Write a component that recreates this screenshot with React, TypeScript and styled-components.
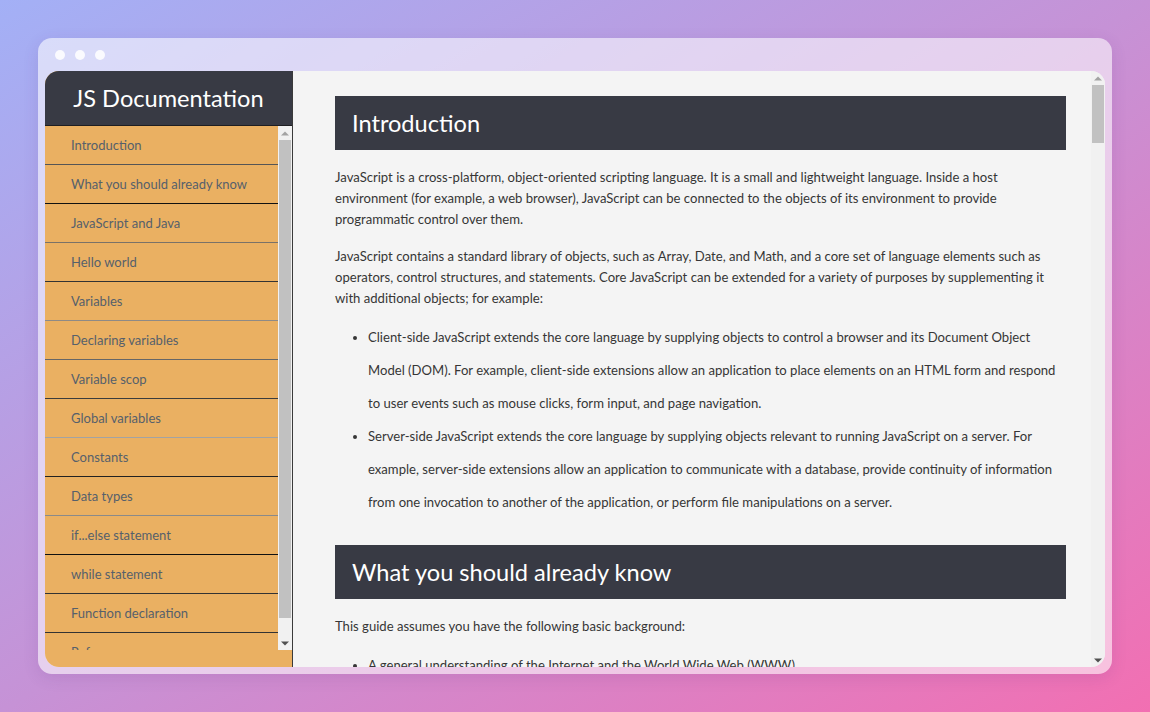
import React from "react";
import styled, { createGlobalStyle } from "styled-components";

const GlobalStyle = createGlobalStyle`
  html, body { margin: 0; padding: 0; }
  body {
    width: 1150px;
    height: 712px;
    overflow: hidden;
    font-family: Lato, "Noto Sans", sans-serif;
    background: linear-gradient(to bottom right, #a3b0f6 0%, #c692d6 50%, #f26fb2 100%);
  }
`;

const Stage = styled.div`
  box-sizing: border-box;
  width: 1150px;
  height: 712px;
  padding: 38px;
`;

const Frame = styled.div`
  box-sizing: border-box;
  height: 636px;
  border-radius: 14px;
  background: rgba(255, 255, 255, 0.57);
  box-shadow: 0 4px 16px rgba(80, 40, 120, 0.12);
  padding: 0 7px 7px 7px;
  display: flex;
  flex-direction: column;
`;

const TitleBar = styled.div`
  height: 33px;
  display: flex;
  align-items: center;
  gap: 10px;
  padding-left: 10px;
  flex-shrink: 0;
`;

const Dot = styled.span`
  width: 10px;
  height: 10px;
  border-radius: 50%;
  background: rgba(255, 255, 255, 0.85);
`;

const Window = styled.div`
  flex: 1;
  min-height: 0;
  display: flex;
  border-radius: 14px;
  overflow: hidden;
  background: #f4f4f4;
`;

/* ---------- classic scrollbar drawing ---------- */

const Track = styled.div<{ $width: number }>`
  width: ${(p) => p.$width}px;
  flex-shrink: 0;
  background: #f1f1f1;
  display: flex;
  flex-direction: column;
`;

const ArrowBtn = styled.div`
  height: 14px;
  flex-shrink: 0;
  display: flex;
  align-items: center;
  justify-content: center;
`;

const Thumb = styled.div<{ $size: number }>`
  height: ${(p) => p.$size}px;
  margin: 0 1px;
  background: #c1c1c1;
  flex-shrink: 0;
`;

const TrackRest = styled.div`
  flex: 1;
`;

const Arrow = ({ down, color }: { down?: boolean; color: string }) => (
  <svg width="8" height="5" viewBox="0 0 8 5">
    <polygon
      points={down ? "0,0.5 8,0.5 4,4.5" : "0,4.5 8,4.5 4,0.5"}
      fill={color}
    />
  </svg>
);

const Scrollbar = ({ width, thumb }: { width: number; thumb: number }) => (
  <Track $width={width}>
    <ArrowBtn>
      <Arrow color="#a3a3a3" />
    </ArrowBtn>
    <Thumb $size={thumb} />
    <TrackRest />
    <ArrowBtn>
      <Arrow down color="#505050" />
    </ArrowBtn>
  </Track>
);

/* ---------- sidebar ---------- */

const Sidebar = styled.nav`
  width: 247px;
  flex-shrink: 0;
  background: #eab062;
  border-right: 1px solid #3a3a3a;
  display: flex;
  flex-direction: column;
`;

const SideHeader = styled.header`
  height: 55px;
  flex-shrink: 0;
  background: #383a44;
  color: #ffffff;
  display: flex;
  align-items: center;
  justify-content: center;
  font-size: 23.6px;
  font-weight: 400;
  border-bottom: 1px solid #1e1e22;
  box-sizing: border-box;
`;

const NavBody = styled.div`
  height: 524px;
  display: flex;
  flex-shrink: 0;
`;

const NavList = styled.ul`
  flex: 1;
  min-width: 0;
  list-style: none;
  margin: 0;
  padding: 0;
  overflow: hidden;
`;

const NavItem = styled.li<{ $line: string }>`
  box-sizing: border-box;
  height: 39px;
  display: flex;
  align-items: center;
  padding-left: 26px;
  font-size: 13px;
  color: #56606b;
  border-bottom: 1px solid ${(p) => p.$line};
  white-space: nowrap;
`;

/* ---------- main ---------- */

const Main = styled.main`
  flex: 1;
  min-width: 0;
  display: flex;
`;

const Content = styled.div`
  flex: 1;
  min-width: 0;
  overflow: hidden;
  padding: 25px 25px 0 42px;
  box-sizing: border-box;
  color: #363636;
`;

const Section = styled.section`
  margin-bottom: 26px;
`;

const SectionTitle = styled.header`
  height: 54px;
  box-sizing: border-box;
  background: #383a44;
  color: #ffffff;
  font-size: 23.6px;
  display: flex;
  align-items: center;
  padding: 0 0 1px 17px;
  margin-bottom: 17px;
`;

const Para = styled.p`
  margin: 0 0 12px 0;
  font-size: 13.1px;
  line-height: 21px;

  & + & {
    margin-top: 16px;
  }
`;

const List = styled.ul`
  margin: 0;
  padding-left: 33px;
`;

const ListItem = styled.li`
  font-size: 13.1px;
  line-height: 33px;
`;

const navItems = [
  "Introduction",
  "What you should already know",
  "JavaScript and Java",
  "Hello world",
  "Variables",
  "Declaring variables",
  "Variable scop",
  "Global variables",
  "Constants",
  "Data types",
  "if...else statement",
  "while statement",
  "Function declaration",
  "Reference",
];

const lines = [
  "#555",
  "#111",
  "#7a7268",
  "#333",
  "#8e8a86",
  "#666",
  "#3c3c3c",
  "#a3a3a3",
  "#222",
  "#8a8a8a",
  "#111",
  "#333",
  "#333",
  "#555",
];

type Block = { p?: string; ul?: string[] };
type Sec = { title: string; blocks: Block[] };

const sections: Sec[] = [
  {
    title: "Introduction",
    blocks: [
      {
        p: "JavaScript is a cross-platform, object-oriented scripting language. It is a small and lightweight language. Inside a host environment (for example, a web browser), JavaScript can be connected to the objects of its environment to provide programmatic control over them.",
      },
      {
        p: "JavaScript contains a standard library of objects, such as Array, Date, and Math, and a core set of language elements such as operators, control structures, and statements. Core JavaScript can be extended for a variety of purposes by supplementing it with additional objects; for example:",
      },
      {
        ul: [
          "Client-side JavaScript extends the core language by supplying objects to control a browser and its Document Object Model (DOM). For example, client-side extensions allow an application to place elements on an HTML form and respond to user events such as mouse clicks, form input, and page navigation.",
          "Server-side JavaScript extends the core language by supplying objects relevant to running JavaScript on a server. For example, server-side extensions allow an application to communicate with a database, provide continuity of information from one invocation to another of the application, or perform file manipulations on a server.",
        ],
      },
    ],
  },
  {
    title: "What you should already know",
    blocks: [
      { p: "This guide assumes you have the following basic background:" },
      {
        ul: [
          "A general understanding of the Internet and the World Wide Web (WWW).",
          "Good working knowledge of HyperText Markup Language (HTML).",
          "Some programming experience. If you are new to programming, try one of the tutorials linked on the main page about JavaScript.",
        ],
      },
    ],
  },
  {
    title: "JavaScript and Java",
    blocks: [
      {
        p: "JavaScript and Java are similar in some ways but fundamentally different in some others. The JavaScript language resembles Java but does not have Java's static typing and strong type checking.",
      },
    ],
  },
];

export default function App() {
  return (
    <>
      <GlobalStyle />
      <Stage>
        <Frame>
          <TitleBar>
            <Dot />
            <Dot />
            <Dot />
          </TitleBar>
          <Window>
            <Sidebar>
              <SideHeader>JS Documentation</SideHeader>
              <NavBody>
                <NavList>
                  {navItems.map((item, i) => (
                    <NavItem key={item} $line={lines[i]}>
                      {item}
                    </NavItem>
                  ))}
                </NavList>
                <Scrollbar width={14} thumb={478} />
              </NavBody>
            </Sidebar>
            <Main>
              <Content>
                {sections.map((s) => (
                  <Section key={s.title}>
                    <SectionTitle>{s.title}</SectionTitle>
                    {s.blocks.map((b, j) =>
                      b.p ? (
                        <Para key={j}>{b.p}</Para>
                      ) : (
                        <List key={j}>
                          {b.ul!.map((li, k) => (
                            <ListItem key={k}>{li}</ListItem>
                          ))}
                        </List>
                      )
                    )}
                  </Section>
                ))}
              </Content>
              <Scrollbar width={14} thumb={58} />
            </Main>
          </Window>
        </Frame>
      </Stage>
    </>
  );
}
